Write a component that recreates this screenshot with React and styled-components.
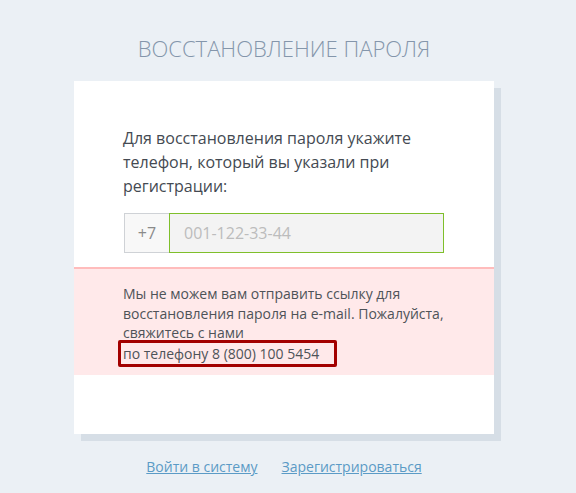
import { createGlobalStyle, styled } from "styled-components";

const GlobalStyle = createGlobalStyle`
  html, body {
    margin: 0;
    padding: 0;
    background: #ebf0f5;
    font-family: "Open Sans", "Liberation Sans", sans-serif;
  }
`;

const App = () => {
  return (
    <Page>
      <GlobalStyle />
      <Title>Восстановление пароля</Title>
      <Card>
        <Body>
          <Lead>
            Для восстановления пароля укажите телефон, который вы указали при
            регистрации:
          </Lead>
          <PhoneGroup>
            <Prefix>+7</Prefix>
            <PhoneInput type="tel" placeholder="001-122-33-44" />
          </PhoneGroup>
        </Body>
        <Alert>
          <p>
            Мы не можем вам отправить ссылку для восстановления пароля на
            e-mail. Пожалуйста, свяжитесь с нами
          </p>
          <Highlight>по телефону 8 (800) 100 5454</Highlight>
        </Alert>
      </Card>
      <Links>
        <a href="#">Войти в систему</a>
        <a href="#">Зарегистрироваться</a>
      </Links>
    </Page>
  );
};

const Page = styled.div`
  width: 576px;
  height: 493px;
  padding-top: 33px;
  box-sizing: border-box;
  display: flex;
  flex-direction: column;
  align-items: center;
  overflow: hidden;
`;

const Title = styled.h1`
  margin: 0 0 0 -8px;
  font-size: 22px;
  font-weight: 300;
  line-height: 30px;
  text-transform: uppercase;
  color: #8496ab;
`;

const Card = styled.div`
  margin: 18px 0 0 -8px;
  width: 420px;
  height: 353px;
  background: #ffffff;
  box-shadow: 7px 7px 0 #d6dee6;
`;

const Body = styled.div`
  padding: 45px 50px 14px 49px;
`;

const Lead = styled.p`
  margin: 0 0 15px;
  font-size: 16px;
  line-height: 24px;
  color: #444a52;
`;

const PhoneGroup = styled.div`
  display: flex;
  height: 40px;
  margin-left: 1px;
`;

const Prefix = styled.span`
  width: 45px;
  box-sizing: border-box;
  display: flex;
  align-items: center;
  justify-content: center;
  border: 1px solid #cfd2d6;
  border-right: none;
  background: #f8f8f8;
  color: #8a8a8a;
  font-size: 16px;
`;

const PhoneInput = styled.input`
  flex: 1;
  min-width: 0;
  box-sizing: border-box;
  border: 1px solid #7fbf2b;
  background: #f3f3f3;
  padding: 0 14px;
  font-family: inherit;
  font-size: 16px;
  color: #444;
  outline: none;
  &::placeholder {
    color: #bcbcbc;
  }
`;

const Alert = styled.div`
  background: #ffe9ea;
  border-top: 2px solid #ffbcbc;
  padding: 15px 50px 8px 49px;
  font-size: 14px;
  line-height: 19.5px;
  color: #4e5358;
  p {
    margin: 0;
  }
`;

const Highlight = styled.span`
  display: block;
  width: fit-content;
  margin: -3px 0 0 -5px;
  padding: 1px 15px 1px 2px;
  border: 3px solid #a30000;
  border-radius: 2px;
`;

const Links = styled.div`
  margin: 23px 0 0 -8px;
  display: flex;
  gap: 24px;
  font-size: 14px;
  a {
    color: #5b9bc6;
    text-decoration: underline;
  }
`;

export default App;
